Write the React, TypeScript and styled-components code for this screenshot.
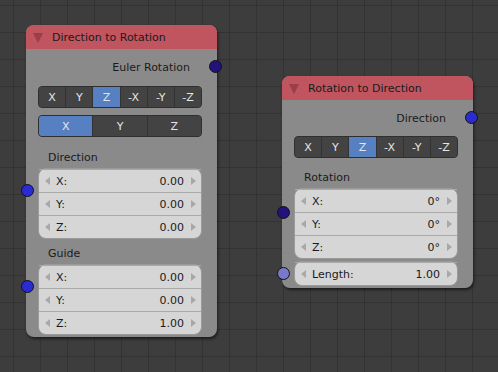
import React from 'react'
import styled, { createGlobalStyle } from 'styled-components'

const GlobalStyle = createGlobalStyle`
  html, body {
    margin: 0;
    padding: 0;
    background: #3d3d3d;
  }
  body {
    font-family: "DejaVu Sans", "Liberation Sans", sans-serif;
    font-size: 11px;
  }
`

const AXES = ['X', 'Y', 'Z', '-X', '-Y', '-Z']

interface iField {
  label: string
  value: string
}

const directionFields: iField[] = [
  { label: 'X:', value: '0.00' },
  { label: 'Y:', value: '0.00' },
  { label: 'Z:', value: '0.00' },
]

const guideFields: iField[] = [
  { label: 'X:', value: '0.00' },
  { label: 'Y:', value: '0.00' },
  { label: 'Z:', value: '1.00' },
]

const rotationFields: iField[] = [
  { label: 'X:', value: '0°' },
  { label: 'Y:', value: '0°' },
  { label: 'Z:', value: '0°' },
]

const Arrows: React.FC = () => (
  <>
    <ArrowL />
    <ArrowR />
  </>
)

const FieldBox: React.FC<{ fields: iField[]; socket?: string; socketTop?: number }> = ({
  fields,
  socket,
  socketTop = 15,
}) => (
  <Box>
    {socket && <InSocket $color={socket} $top={socketTop} />}
    {fields.map((f) => (
      <Field key={f.label}>
        <Arrows />
        <FieldLabel>{f.label}</FieldLabel>
        <FieldValue>{f.value}</FieldValue>
      </Field>
    ))}
  </Box>
)

const AxisRow: React.FC<{ items: string[]; active: number }> = ({ items, active }) => (
  <ButtonRow>
    {items.map((a, i) => (
      <Btn key={a} $active={i === active}>
        {a}
      </Btn>
    ))}
  </ButtonRow>
)

const App: React.FC = () => {
  return (
    <>
      <GlobalStyle />
      <Canvas>
        <Node $left={26} $top={25} $height={312}>
          <Header>
            <Collapse />
            <span>Direction to Rotation</span>
          </Header>
          <Body>
            <Output $mb={8}>
              Euler Rotation
              <OutSocket $color="#22127a" />
            </Output>
            <AxisRow items={AXES} active={2} />
            <Gap $h={7} />
            <AxisRow items={['X', 'Y', 'Z']} active={0} />
            <Label $mt={9}>Direction</Label>
            <FieldBox fields={directionFields} socket="#2b2bd4" />
            <Label $mt={3}>Guide</Label>
            <FieldBox fields={guideFields} socket="#2b2bd4" />
          </Body>
        </Node>

        <Node $left={282} $top={76} $height={212}>
          <Header>
            <Collapse />
            <span>Rotation to Direction</span>
          </Header>
          <Body>
            <Output $mb={7}>
              Direction
              <OutSocket $color="#2b2bd4" />
            </Output>
            <AxisRow items={AXES} active={2} />
            <Label $mt={8}>Rotation</Label>
            <FieldBox fields={rotationFields} socket="#22127a" socketTop={17} />
            <Gap $h={2} />
            <Box>
              <InSocket $color="#7878cc" $top={5} />
              <Field>
                <Arrows />
                <FieldLabel>Length:</FieldLabel>
                <FieldValue>1.00</FieldValue>
              </Field>
            </Box>
          </Body>
        </Node>
      </Canvas>
    </>
  )
}

export default App

const Canvas = styled.div`
  position: relative;
  width: 498px;
  height: 372px;
  overflow: hidden;
  background-color: #3d3d3d;
  background-image:
    linear-gradient(to right, #333333 1px, transparent 1px),
    linear-gradient(to bottom, #333333 1px, transparent 1px);
  background-size: 27px 27px;
  background-position: 13px 5px;
`

const Node = styled.div<{ $left: number; $top: number; $height: number }>`
  position: absolute;
  left: ${(p) => p.$left}px;
  top: ${(p) => p.$top}px;
  width: 191px;
  height: ${(p) => p.$height}px;
  background: #8a8a8a;
  border-radius: 8px;
  box-shadow: 1px 2px 3px rgba(0, 0, 0, 0.55);
  display: flex;
  flex-direction: column;
`

const Header = styled.div`
  height: 24px;
  display: flex;
  align-items: center;
  gap: 9px;
  padding-left: 7px;
  background: #c0555f;
  border-radius: 8px 8px 0 0;
  color: #1b1b1b;
  flex-shrink: 0;
`

const Collapse = styled.div`
  width: 0;
  height: 0;
  border-left: 5.5px solid transparent;
  border-right: 5.5px solid transparent;
  border-top: 10px solid #983f48;
  margin-top: 1px;
`

const Body = styled.div`
  display: flex;
  flex-direction: column;
  padding: 7px 15px 5px 12px;
`

const Output = styled.div<{ $mb: number }>`
  position: relative;
  height: 22px;
  display: flex;
  align-items: center;
  justify-content: flex-end;
  padding-right: 12px;
  margin-bottom: ${(p) => p.$mb}px;
  color: #1b1b1b;
`

const OutSocket = styled.div<{ $color: string }>`
  position: absolute;
  right: -20px;
  top: 4px;
  width: 11px;
  height: 11px;
  border-radius: 50%;
  background: ${(p) => p.$color};
  border: 1px solid #111;
`

const InSocket = styled.div<{ $color: string; $top: number }>`
  position: absolute;
  left: -18px;
  top: ${(p) => p.$top}px;
  width: 11px;
  height: 11px;
  border-radius: 50%;
  background: ${(p) => p.$color};
  border: 1px solid #111;
`

const ButtonRow = styled.div`
  display: flex;
  height: 22px;
  border: 1px solid #2f2f2f;
  border-radius: 4px;
  overflow: hidden;
  background: #444444;
  box-sizing: border-box;
`

const Btn = styled.div<{ $active: boolean }>`
  flex: 1;
  display: flex;
  align-items: center;
  justify-content: center;
  color: #e6e6e6;
  background: ${(p) => (p.$active ? '#5680c2' : '#434343')};
  border-left: 1px solid #333333;
  &:first-child {
    border-left: none;
  }
`

const Gap = styled.div<{ $h: number }>`
  height: ${(p) => p.$h}px;
  flex-shrink: 0;
`

const Label = styled.div<{ $mt: number }>`
  margin-top: ${(p) => p.$mt}px;
  height: 22px;
  display: flex;
  align-items: center;
  padding-left: 10px;
  color: #1b1b1b;
`

const Box = styled.div`
  position: relative;
  display: flex;
  flex-direction: column;
  background: #d6d6d6;
  border: 1px solid #9a9a9a;
  border-radius: 8px;
  box-sizing: border-box;
`

const Field = styled.div`
  position: relative;
  height: 22px;
  display: flex;
  align-items: center;
  justify-content: space-between;
  padding: 0 17px 0 17px;
  color: #1b1b1b;
  border-top: 1px solid #a9a9a9;
  &:first-child {
    border-top: none;
  }
`

const FieldLabel = styled.span``

const FieldValue = styled.span``

const ArrowL = styled.div`
  position: absolute;
  left: 6px;
  top: 50%;
  margin-top: -4px;
  width: 0;
  height: 0;
  border-top: 4px solid transparent;
  border-bottom: 4px solid transparent;
  border-right: 5px solid #a8a8a8;
`

const ArrowR = styled.div`
  position: absolute;
  right: 5px;
  top: 50%;
  margin-top: -4px;
  width: 0;
  height: 0;
  border-top: 4px solid transparent;
  border-bottom: 4px solid transparent;
  border-left: 5px solid #a8a8a8;
`
